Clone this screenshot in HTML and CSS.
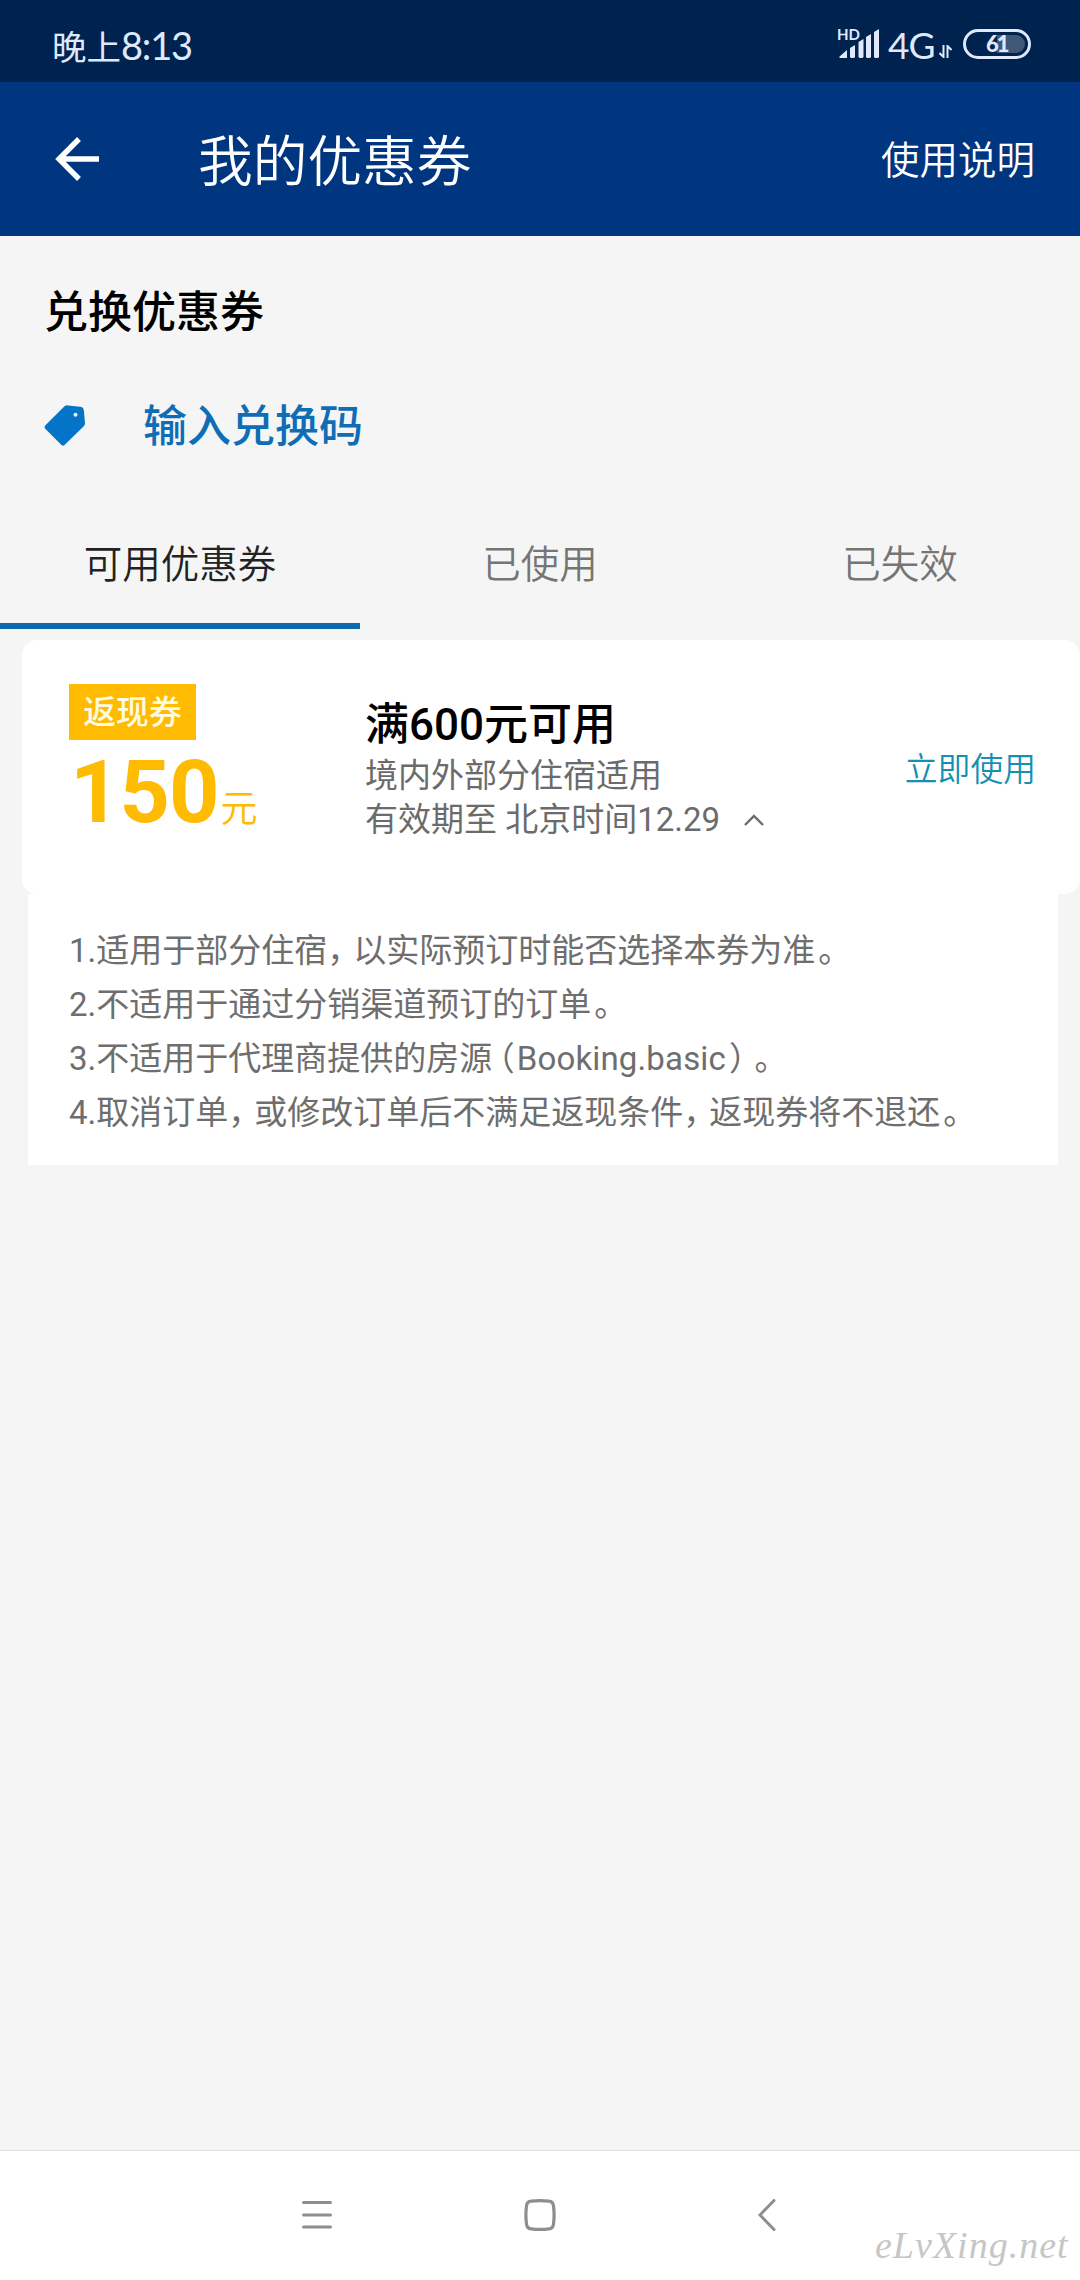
FILE: index.html
```html
<!DOCTYPE html>
<html lang="zh-CN">
<head>
<meta charset="utf-8">
<title>我的优惠券</title>
<link rel="stylesheet" href="styles.css">
</head>
<body>
<div class="screen">
  <div class="status">
    <div class="clock">晚上<span class="digits">8:13</span></div>
    <div class="indicators">
      <div class="signal">
        <span class="hd">HD</span>
        <svg width="41" height="30" viewBox="0 0 41 30" fill="#dfe9fb"><path d="M0.500 27.500L8 21V29H1Q0 29 .5 27.500ZM11 19L16 16V28L15 29H12L11 28ZM19.500 13L24.500 10V28L23.500 29H20.500L19.500 28ZM27 8L32 5V28L31 29H28L27 28ZM35 3L40 0V28L39 29H36L35 28Z"/></svg>
      </div>
      <span class="net">4G</span>
      <svg class="updown" width="13" height="13" viewBox="0 0 13 13" fill="none" stroke="#dfe9fb" stroke-width="2"><path d="M4.500 0V12L0.500 8M8.500 13V1L12.500 5"/></svg>
      <div class="battery"><span class="level"></span><span class="percent">61</span></div>
    </div>
  </div>

  <header class="appbar">
    <svg class="back" width="44" height="44" viewBox="0 0 44 44" fill="none" stroke="#fff" stroke-width="5.400"><path d="M24 2L4 22L24 42M3 22H44"/></svg>
    <h1 class="title">我的优惠券</h1>
    <a class="help">使用说明</a>
  </header>

  <section class="redeem">
    <h2 class="redeem-title">兑换优惠券</h2>
    <div class="redeem-link">
      <svg width="42" height="42" viewBox="0 0 42 42"><path fill="#0474c9" fill-rule="evenodd" d="M20.500 1.300Q22 .2 24 .4L36 1.700Q39.500 2 39.900 5.500L41 18Q41 20 39.500 21.500L20.500 40Q19 41.500 17.500 40L1 23.500Q0 22 1.200 20.500ZM31.500 7.800A2 2 0 1 0 31.500 11.800A2 2 0 1 0 31.500 7.800Z"/></svg>
      <span>输入兑换码</span>
    </div>
  </section>

  <nav class="tabs">
    <a class="tab active">可用优惠券</a>
    <a class="tab">已使用</a>
    <a class="tab">已失效</a>
  </nav>

  <main class="coupons">
    <article class="coupon">
      <div class="amount">
        <span class="badge">返现券</span>
        <div class="value"><b>150</b><span>元</span></div>
      </div>
      <div class="info">
        <h3>满600元可用</h3>
        <p>境内外部分住宿适用</p>
        <p class="expiry">有效期至 北京时间12.29<svg width="20" height="12" viewBox="0 0 20 12" fill="none" stroke="#6b6b6b" stroke-width="2.400"><path d="M1 11L10 2L19 11"/></svg></p>
      </div>
      <a class="use">立即使用</a>
    </article>
    <div class="rules">
      <p>1.适用于部分住宿<span class="comma">，</span>以实际预订时能否选择本券为准<span class="stop">。</span></p>
      <p>2.不适用于通过分销渠道预订的订单<span class="stop">。</span></p>
      <p>3.不适用于代理商提供的房源<span class="open">（</span><span class="latin">Booking.basic</span><span class="close">）</span><span class="stop">。</span></p>
      <p>4.取消订单<span class="comma">，</span>或修改订单后不满足返现条件<span class="comma">，</span>返现券将不退还<span class="stop">。</span></p>
    </div>
  </main>

  <footer class="navbar">
    <svg width="30" height="32" viewBox="0 0 30 32" stroke="#8e8e8e" stroke-width="3" stroke-linecap="round"><path d="M1.500 3.500H28.500M1.500 16H28.500M1.500 28H28.500"/></svg>
    <svg class="home" width="32" height="32" viewBox="0 0 32 32" fill="none" stroke="#8e8e8e" stroke-width="3.200"><path d="M7 2.200Q16 1 25 2.200Q29 2.500 29.500 7Q30.700 16 29.500 25Q29 29.500 25 29.800Q16 31 7 29.800Q3 29.500 2.500 25Q1.300 16 2.500 7Q3 2.500 7 2.200Z"/></svg>
    <svg width="18" height="32" viewBox="0 0 18 32" fill="none" stroke="#8e8e8e" stroke-width="3" stroke-linecap="round"><path d="M16 1.500L2 16L16 30.500"/></svg>
    <span class="watermark">eLvXing.net</span>
  </footer>
</div>
</body>
</html>
```
FILE: styles.css
```css
* { box-sizing: border-box; margin: 0; padding: 0; }

body {
  background: #f5f5f5;
  font-family: Roboto, "Noto Sans CJK SC", sans-serif;
}

h1, h2, h3 { font-weight: 500; }
svg { display: block; flex: none; }

.screen {
  width: 1080px;
  height: 2280px;
  display: flex;
  flex-direction: column;
  overflow: hidden;
}

.status {
  height: 82px;
  padding: 0 49px 0 52px;
  background: #00224f;
  color: #dfe9fb;
  display: flex;
  justify-content: space-between;
}
.clock {
  font: 400 34.500px/90px Lato, "Noto Sans CJK SC", sans-serif;
  white-space: nowrap;
}
.digits { font-size: 38px; letter-spacing: -1.200px; }
.indicators { display: flex; align-items: flex-start; }
.signal { position: relative; width: 41px; margin: 29px 8px 0 0; }
.hd {
  position: absolute;
  left: -2px;
  top: -3px;
  font: 700 15px/16px Lato, sans-serif;
}
.net {
  width: 50px;
  font: 400 37px/90px Lato, sans-serif;
  letter-spacing: -1px;
}
.updown { margin: 45px 11px 0 1px; }
.battery {
  position: relative;
  width: 68px;
  height: 30px;
  margin-top: 29px;
  border: 3px solid #dfe9fb;
  border-radius: 15px;
}
.level {
  position: absolute;
  right: 3px;
  top: 3px;
  width: 28px;
  height: 18px;
  border-radius: 0 9px 9px 0;
  background: #405878;
}
.percent {
  position: absolute;
  left: 20px;
  top: 0;
  font: 900 22px/24px Lato, sans-serif;
  letter-spacing: -2px;
}

.appbar {
  height: 154px;
  padding: 0 45px 0 55px;
  background: #003580;
  color: #fff;
  display: flex;
  align-items: center;
}
.title {
  margin-left: 99px;
  padding-top: 6px;
  font-size: 54.700px;
  font-weight: 350;
  line-height: 80px;
}
.help { margin-left: auto; padding-top: 4px; font-size: 38.500px; font-weight: 350; line-height: 58px; }

.redeem { height: 254px; padding: 47px 45px 0 44px; }
.redeem-title { font-size: 44px; line-height: 60px; color: #000; }
.redeem-link {
  margin-top: 50px;
  display: flex;
  align-items: center;
  gap: 57px;
  color: #0f6db5;
  font-size: 44px;
  line-height: 64px;
  font-weight: 500;
}
.redeem-link span { padding-top: 2px; }

.tabs { height: 139px; display: grid; grid-template-columns: repeat(3, 1fr); }
.tab {
  padding-top: 45px;
  text-align: center;
  color: #757575;
  font-size: 38.500px;
  font-weight: 350;
  line-height: 60px;
}
.active { color: #222; border-bottom: 6px solid #0f6bb0; }

.coupons { padding: 11px 0 0 22px; }
.coupon {
  height: 254px;
  padding: 44px 44px 0 47px;
  border-radius: 15px;
  background: #fff;
  display: flex;
  align-items: flex-start;
}
.amount { width: 296px; }
.badge {
  display: block;
  width: 127px;
  height: 56px;
  background: #febb02;
  color: #fffbe0;
  font-size: 32.800px;
  font-weight: 500;
  line-height: 59px;
  text-align: center;
}
.value {
  margin-left: 1px;
  display: flex;
  align-items: baseline;
  color: #febb02;
  line-height: 104px;
}
.value b { font-size: 88px; letter-spacing: -1px; }
.value span { margin-left: 2px; font-size: 37px; font-weight: 350; }
.info { padding-top: 12px; color: #6b6b6b; font-size: 33px; line-height: 44px; white-space: nowrap; }
.info h3 { color: #000; font-size: 44px; line-height: 58px; }
.info p { font-weight: 400; }
.expiry { display: flex; align-items: center; gap: 24px; }
.use { margin: 64px 0 0 auto; color: #1590b2; font-size: 32.800px; font-weight: 350; line-height: 44px; }

.rules {
  width: 1030px;
  height: 271px;
  margin-left: 6px;
  padding: 30px 0 0 41px;
  background: #fff;
  color: #6e6e6e;
  font-size: 33px;
  font-weight: 400;
  line-height: 54px;
  white-space: nowrap;
}
.comma { letter-spacing: -7px; }
.stop { margin-left: 3px; }
.open, .close { font-feature-settings: "halt"; }
.open { margin: 0 2px 0 6px; }
.latin { letter-spacing: 0.150px; }
.close { margin: 0 6px 0 3px; }

.navbar {
  position: relative;
  height: 130px;
  margin-top: auto;
  padding: 48px 304px 0 302px;
  border-top: 1px solid #dedede;
  background: #fff;
  display: flex;
}
.home { margin: 0 auto 0 192px; }
.watermark {
  position: absolute;
  left: 875px;
  top: 72px;
  color: #c6c6c6;
  font: italic 400 38px/44px "Liberation Serif", serif;
  letter-spacing: 1px;
}
```
